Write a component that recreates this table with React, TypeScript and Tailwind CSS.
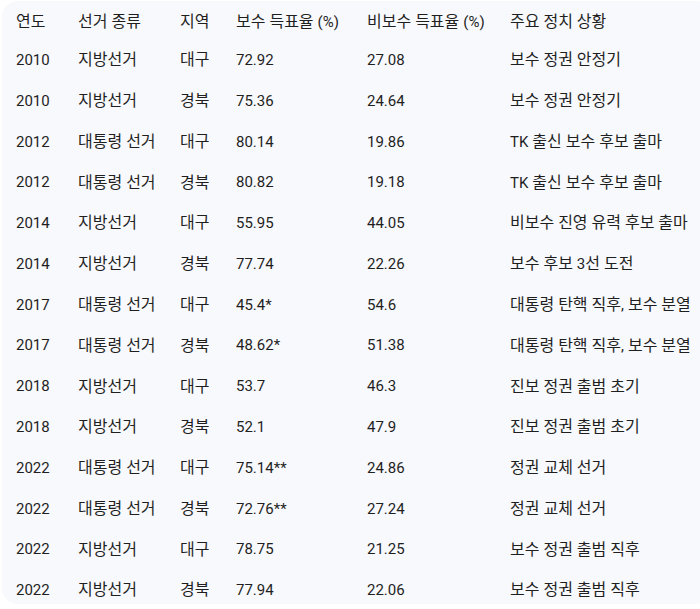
import React from "react";

const rows: string[][] = [
  ["2010", "지방선거", "대구", "72.92", "27.08", "보수 정권 안정기"],
  ["2010", "지방선거", "경북", "75.36", "24.64", "보수 정권 안정기"],
  ["2012", "대통령 선거", "대구", "80.14", "19.86", "TK 출신 보수 후보 출마"],
  ["2012", "대통령 선거", "경북", "80.82", "19.18", "TK 출신 보수 후보 출마"],
  ["2014", "지방선거", "대구", "55.95", "44.05", "비보수 진영 유력 후보 출마"],
  ["2014", "지방선거", "경북", "77.74", "22.26", "보수 후보 3선 도전"],
  ["2017", "대통령 선거", "대구", "45.4*", "54.6", "대통령 탄핵 직후, 보수 분열"],
  ["2017", "대통령 선거", "경북", "48.62*", "51.38", "대통령 탄핵 직후, 보수 분열"],
  ["2018", "지방선거", "대구", "53.7", "46.3", "진보 정권 출범 초기"],
  ["2018", "지방선거", "경북", "52.1", "47.9", "진보 정권 출범 초기"],
  ["2022", "대통령 선거", "대구", "75.14**", "24.86", "정권 교체 선거"],
  ["2022", "대통령 선거", "경북", "72.76**", "27.24", "정권 교체 선거"],
  ["2022", "지방선거", "대구", "78.75", "21.25", "보수 정권 출범 직후"],
  ["2022", "지방선거", "경북", "77.94", "22.06", "보수 정권 출범 직후"],
];

const header = ["연도", "선거 종류", "지역", "보수 득표율 (%)", "비보수 득표율 (%)", "주요 정치 상황"];

function Txt({ s }: { s: string }) {
  const parts = s.split(/([\uac00-\ud7a3 ]+)/).filter((p) => p.length > 0);
  return (
    <>
      {parts.map((p, i) =>
        /[\uac00-\ud7a3]/.test(p) ? (
          <span key={i} className="text-[16px]">
            {p}
          </span>
        ) : (
          <span key={i}>{p}</span>
        )
      )}
    </>
  );
}

export default function App() {
  return (
    <div className="w-[700px] h-[609px] bg-white pl-[2px] pt-[1px]">
      <div
        className="h-[603px] w-[710px] overflow-hidden rounded-2xl bg-[#f8f9fc] pt-[3px] text-[15px] text-[#1f1f1f]"
        style={{ fontFamily: "Roboto, 'Noto Sans CJK KR', sans-serif" }}
      >
        <div className="grid h-[36px] grid-cols-[76px_102px_56px_131px_143px_1fr] items-center">
          {header.map((h, i) => (
            <div key={i} className={i === 0 ? "pl-[14px] whitespace-nowrap" : "whitespace-nowrap"}>
              <Txt s={h} />
            </div>
          ))}
        </div>
        {rows.map((r, ri) => (
          <div
            key={ri}
            className="grid h-[40.77px] grid-cols-[76px_102px_56px_131px_143px_1fr] items-center"
          >
            {r.map((c, i) => (
              <div key={i} className={i === 0 ? "pl-[14px] whitespace-nowrap" : "whitespace-nowrap"}>
                <Txt s={c} />
              </div>
            ))}
          </div>
        ))}
      </div>
    </div>
  );
}
